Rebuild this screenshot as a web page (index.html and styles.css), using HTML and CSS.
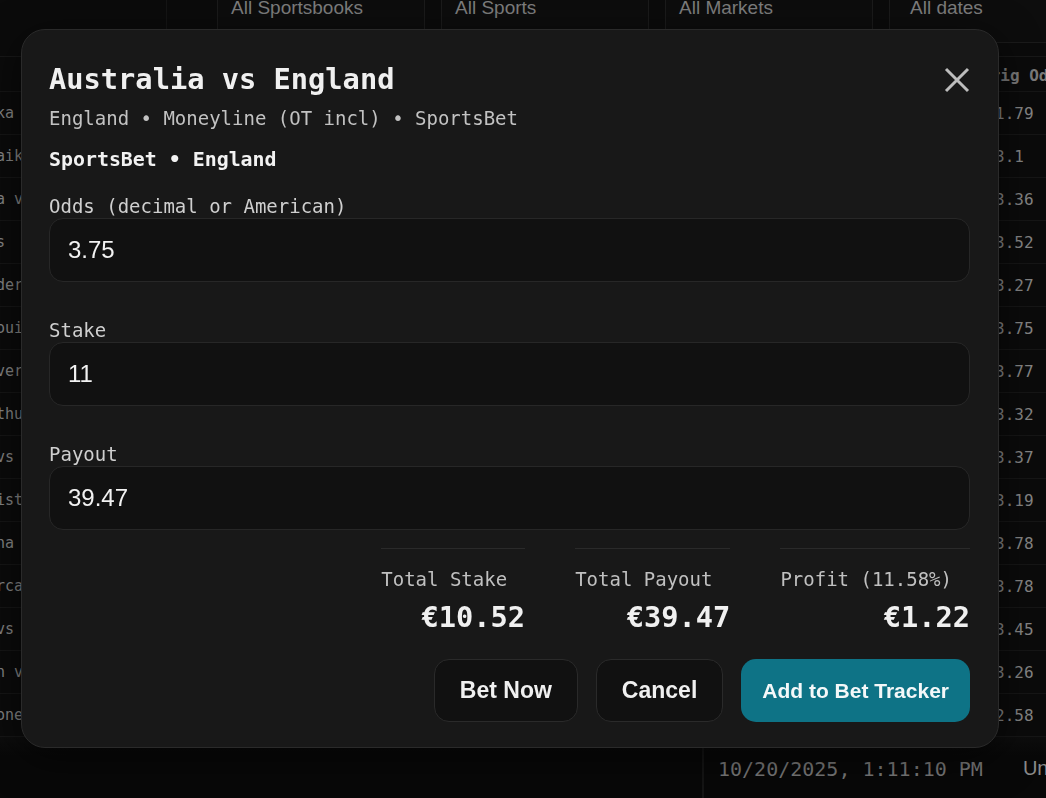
FILE: index.html
```html
<!DOCTYPE html>
<html lang="en">
<head>
<meta charset="utf-8">
<title>Add bet</title>
<link rel="stylesheet" href="styles.css">
</head>
<body>
<div class="page">
  <div class="topbar">
    <div class="brand"></div>
    <div class="filter">All Sportsbooks</div>
    <div class="filter">All Sports</div>
    <div class="filter">All Markets</div>
    <div class="filter last">All dates</div>
  </div>
  <div class="table">
    <div class="row head"><div class="ev"></div><div class="mid"></div><div class="od">Orig Odds</div></div>
    <div class="row"><div class="ev">ka vs Hobart</div><div class="mid"></div><div class="od">1.79</div></div>
    <div class="row"><div class="ev">aik Rovers</div><div class="mid"></div><div class="od">3.1</div></div>
    <div class="row"><div class="ev">a vs Leeds</div><div class="mid"></div><div class="od">3.36</div></div>
    <div class="row"><div class="ev">s</div><div class="mid"></div><div class="od">3.52</div></div>
    <div class="row"><div class="ev">der City</div><div class="mid"></div><div class="od">3.27</div></div>
    <div class="row"><div class="ev">ouis Blues</div><div class="mid"></div><div class="od">3.75</div></div>
    <div class="row"><div class="ev">ver Nuggets</div><div class="mid"></div><div class="od">3.77</div></div>
    <div class="row"><div class="ev">thunder</div><div class="mid"></div><div class="od">3.32</div></div>
    <div class="row"><div class="ev">vs Celtic</div><div class="mid"></div><div class="od">3.37</div></div>
    <div class="row"><div class="ev">ist United</div><div class="mid"></div><div class="od">3.19</div></div>
    <div class="row"><div class="ev">na vs Roma</div><div class="mid"></div><div class="od">3.78</div></div>
    <div class="row"><div class="ev">rca Mallorca</div><div class="mid"></div><div class="od">3.78</div></div>
    <div class="row"><div class="ev">vs Hearts</div><div class="mid"></div><div class="od">3.45</div></div>
    <div class="row"><div class="ev">n vs Lyon</div><div class="mid"></div><div class="od">3.26</div></div>
    <div class="row"><div class="ev">one Stars</div><div class="mid"></div><div class="od">2.58</div></div>
  </div>
  <div class="foot">
    <div class="foot-left"></div>
    <div class="foot-date">10/20/2025, 1:11:10 PM</div>
    <div class="foot-status">Un</div>
  </div>
</div>

<div class="modal">
  <div class="title-row">
    <h2 class="title">Australia vs England</h2>
    <button class="close" aria-label="Close">
      <svg width="26" height="26" viewBox="0 0 26 26"><path d="M2 2 L24 24 M24 2 L2 24" stroke="#bdbdbd" stroke-width="3" fill="none"/></svg>
    </button>
  </div>
  <div class="sub">England • Moneyline (OT incl) • SportsBet</div>
  <div class="pick">SportsBet • England</div>

  <div class="field first">
    <div class="label">Odds (decimal or American)</div>
    <div class="input">3.75</div>
  </div>
  <div class="field">
    <div class="label">Stake</div>
    <div class="input">11</div>
  </div>
  <div class="field">
    <div class="label">Payout</div>
    <div class="input">39.47</div>
  </div>

  <div class="summary">
    <div class="stat"><div class="stat-label">Total Stake</div><div class="stat-value">€10.52</div></div>
    <div class="stat"><div class="stat-label">Total Payout</div><div class="stat-value">€39.47</div></div>
    <div class="stat"><div class="stat-label">Profit (11.58%)</div><div class="stat-value">€1.22</div></div>
  </div>

  <div class="actions">
    <button class="btn secondary">Bet Now</button>
    <button class="btn secondary">Cancel</button>
    <button class="btn primary">Add to Bet Tracker</button>
  </div>
</div>
</body>
</html>
```

FILE: styles.css
```css
* { box-sizing: border-box; }
html, body {
  margin: 0;
  padding: 0;
  background: #090909;
  height: 798px;
  overflow: hidden;
}
body {
  font-family: "DejaVu Sans Mono", "Liberation Mono", monospace;
}

/* background page */
.page { width: 1046px; }
.topbar {
  display: flex;
  height: 57px;
  border-bottom: 1px solid #181818;
  background: #0b0b0b;
  align-items: flex-start;
  overflow: hidden;
}
.brand {
  flex: 0 0 167px;
  height: 56px;
  border-right: 1px solid #151515;
  margin-right: 50px;
}
.filter {
  flex: 0 0 208px;
  height: 44px;
  margin-right: 16px;
  border: 1px solid #1b1b1b;
  border-top: none;
  border-radius: 0 0 8px 8px;
  background: #0d0d0d;
  color: #7d7d7d;
  font-family: "Liberation Sans", Arial, sans-serif;
  font-size: 19px;
  line-height: 18px;
  padding-left: 13px;
  margin-top: -1px;
  white-space: nowrap;
}
.filter.last { flex: 1 0 auto; margin-right: 0; border-right: none; border-radius: 0 0 0 8px; padding-left: 20px; }

.table { background: #0b0b0b; }
.row {
  display: grid;
  grid-template-columns: 21px 1fr 65px;
  height: 43px;
  align-items: center;
  border-bottom: 1px solid #161616;
  color: #858585;
}
.row.head {
  height: 35px;
  align-items: end;
  padding-bottom: 6px;
  font-weight: bold;
  color: #7a7a7a;
  font-size: 16px;
}
.ev {
  font-size: 15px;
  white-space: nowrap;
  overflow: hidden;
  text-indent: -4px;
}
.od { font-size: 16px; padding-left: 14px; white-space: nowrap; }
.row.head .od { padding-left: 0; }

.foot {
  display: flex;
  align-items: center;
  height: 61px;
  background: linear-gradient(#0d0d0d, #080808 30%);
}
.foot-left {
  flex: 0 0 704px;
  height: 100%;
  border-right: 1px solid #151515;
  box-shadow: inset -13px 0 0 -12px #151515;
}
.foot-date {
  flex: 0 0 auto;
  margin-left: 14px;
  font-size: 20px;
  color: #7a7a7a;
  padding-top: 2px;
  white-space: nowrap;
}
.foot-status {
  flex: 0 0 auto;
  margin-left: 40px;
  font-family: "Liberation Sans", Arial, sans-serif;
  font-size: 20px;
  color: #8a8a8a;
  padding-top: 2px;
  white-space: nowrap;
}

/* modal */
.modal {
  position: fixed;
  left: 21px;
  top: 29px;
  width: 978px;
  background: #181818;
  border: 1px solid #2a2a2a;
  border-radius: 24px;
  padding: 32px 28px 25px 27px;
  box-shadow: 0 10px 40px rgba(0, 0, 0, 0.6);
  color: #eeeeee;
}
.title-row {
  display: flex;
  align-items: center;
  justify-content: space-between;
  height: 34px;
}
.title {
  margin: 0;
  font-size: 28.7px;
  line-height: 34px;
  font-weight: bold;
  color: #f0f0f0;
}
.close {
  background: none;
  border: none;
  padding: 0;
  width: 26px;
  height: 26px;
  display: flex;
  margin-top: 1px;
}
.sub {
  margin-top: 10px;
  font-size: 19px;
  line-height: 24px;
  color: #c2c2c2;
}
.pick {
  margin-top: 18px;
  font-size: 19.9px;
  line-height: 24px;
  font-weight: bold;
  color: #f2f2f2;
}
.field { margin-top: 36px; }
.field.first { margin-top: 22px; }
.label {
  font-size: 19px;
  line-height: 24px;
  color: #cfcfcf;
}
.input {
  height: 64px;
  border: 1px solid #272727;
  border-radius: 14px;
  background: #111111;
  display: flex;
  align-items: center;
  padding-left: 18px;
  font-family: "Liberation Sans", Arial, sans-serif;
  font-size: 24px;
  color: #f2f2f2;
}

.summary {
  margin-top: 18px;
  display: flex;
  justify-content: flex-end;
  gap: 50px;
}
.stat {
  border-top: 1px solid #2a2a2a;
  padding-top: 18px;
}
.stat-label {
  font-size: 19px;
  line-height: 24px;
  color: #c0c0c0;
  padding-right: 18px;
}
.stat-value {
  margin-top: 9px;
  text-align: right;
  font-size: 28.7px;
  line-height: 34px;
  font-weight: bold;
  color: #f0f0f0;
}

.actions {
  margin-top: 25px;
  display: flex;
  justify-content: flex-end;
  gap: 18px;
}
.btn {
  height: 63px;
  border-radius: 15px;
  font-family: "Liberation Sans", Arial, sans-serif;
  font-weight: bold;
  cursor: pointer;
}
.btn.secondary {
  background: #111111;
  border: 1px solid #2a2a2a;
  color: #f0f0f0;
  font-size: 23px;
  padding: 0 25px;
}
.btn.primary {
  background: #0e7386;
  border: none;
  color: #f4f8f9;
  font-size: 21px;
  padding: 0 21px;
}
```
